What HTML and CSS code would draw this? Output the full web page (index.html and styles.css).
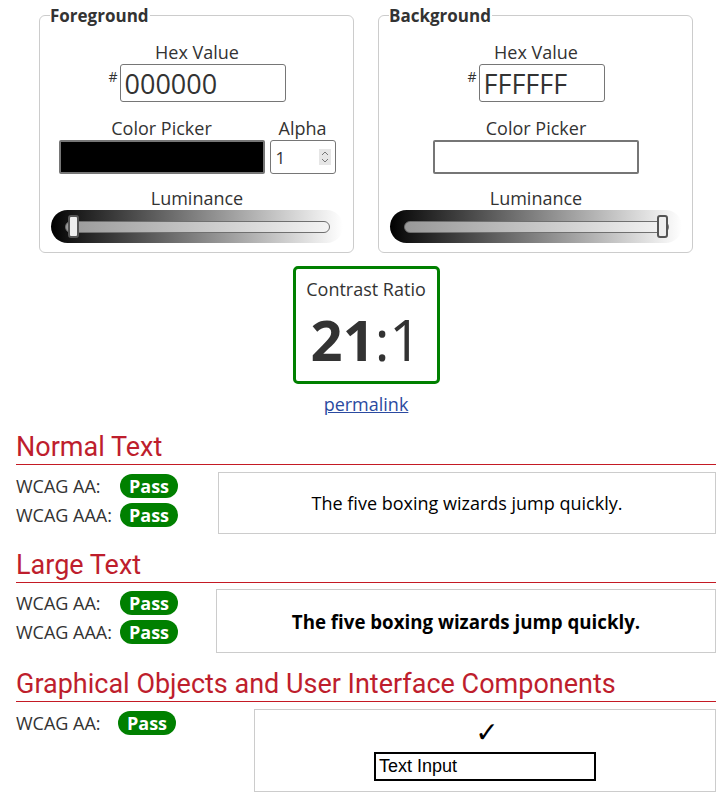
FILE: index.html
```html
<!DOCTYPE html>
<html lang="en">
<head>
<meta charset="utf-8">
<title>Contrast Checker</title>
<link rel="stylesheet" href="styles.css">
</head>
<body>
<main class="page">
  <div class="pickers">
    <fieldset class="panel">
      <legend>Foreground</legend>
      <div class="field-label">Hex Value</div>
      <div class="hex-row"><span class="hash">#</span><input class="hex-input hex-fg" type="text" value="000000"></div>
      <div class="picker-row">
        <div class="picker-col">
          <div class="field-label">Color Picker</div>
          <div class="swatch swatch-black"></div>
        </div>
        <div class="picker-col">
          <div class="field-label">Alpha</div>
          <div class="alpha">
            <span class="alpha-val">1</span>
            <span class="spin"><svg width="10" height="16" viewBox="0 0 10 16"><path d="M2 6 L5 3 L8 6" fill="none" stroke="#777" stroke-width="1"/><path d="M2 10 L5 13 L8 10" fill="none" stroke="#777" stroke-width="1"/></svg></span>
          </div>
        </div>
      </div>
      <div class="field-label lum-label">Luminance</div>
      <div class="slider">
        <div class="track"></div>
        <div class="thumb thumb-left"></div>
      </div>
    </fieldset>
    <fieldset class="panel">
      <legend>Background</legend>
      <div class="field-label">Hex Value</div>
      <div class="hex-row"><span class="hash">#</span><input class="hex-input hex-bg" type="text" value="FFFFFF"></div>
      <div class="picker-row">
        <div class="picker-col">
          <div class="field-label">Color Picker</div>
          <div class="swatch swatch-white"></div>
        </div>
      </div>
      <div class="field-label lum-label">Luminance</div>
      <div class="slider">
        <div class="track"></div>
        <div class="thumb thumb-right"></div>
      </div>
    </fieldset>
  </div>

  <div class="ratio-wrap">
    <div class="ratio">
      <div class="ratio-label">Contrast Ratio</div>
      <div class="ratio-value"><b>21</b>:1</div>
    </div>
    <a class="permalink" href="#">permalink</a>
  </div>

  <section class="result">
    <h2>Normal Text</h2>
    <div class="res-grid res-normal">
      <div class="checks">
        <div class="check"><span class="lbl">WCAG AA:</span><span class="pass">Pass</span></div>
        <div class="check"><span class="lbl">WCAG AAA:</span><span class="pass">Pass</span></div>
      </div>
      <div class="sample sample-normal">The five boxing wizards jump quickly.</div>
    </div>
  </section>

  <section class="result">
    <h2>Large Text</h2>
    <div class="res-grid res-large">
      <div class="checks">
        <div class="check"><span class="lbl">WCAG AA:</span><span class="pass">Pass</span></div>
        <div class="check"><span class="lbl">WCAG AAA:</span><span class="pass">Pass</span></div>
      </div>
      <div class="sample sample-large">The five boxing wizards jump quickly.</div>
    </div>
  </section>

  <section class="result">
    <h2>Graphical Objects and User Interface Components</h2>
    <div class="res-grid res-graph">
      <div class="checks">
        <div class="check"><span class="lbl lbl-g">WCAG AA:</span><span class="pass">Pass</span></div>
      </div>
      <div class="sample sample-graph">
        <div class="tick">✓</div>
        <div class="text-input">Text Input</div>
      </div>
    </div>
  </section>
</main>
</body>
</html>
```

FILE: styles.css
```css
html, body {
  margin: 0;
  padding: 0;
  background: #fff;
}
body {
  font-family: "Open Sans", "Liberation Sans", sans-serif;
  color: #333;
  font-size: 18px;
}
.page {
  width: 700px;
  padding: 4px 16px 0;
}
.pickers {
  display: flex;
  justify-content: center;
  gap: 24px;
}
.panel {
  width: 315px;
  box-sizing: border-box;
  margin: 0;
  padding: 13px 9px 9px 10px;
  border: 1px solid #ccc;
  border-radius: 6px;
  display: flex;
  flex-direction: column;
  align-items: center;
}
.panel legend {
  font-weight: 700;
  font-size: 17px;
  line-height: 23px;
  padding: 0 1px 0 0;
  color: #333;
}
.field-label {
  font-size: 18px;
  line-height: 24px;
  text-align: center;
  color: #333;
}
.hex-row {
  display: flex;
  align-items: flex-start;
  height: 38px;
}
.hash {
  font-size: 14px;
  line-height: 14px;
  margin-top: 6px;
  margin-right: 2px;
}
.hex-input {
  box-sizing: border-box;
  height: 38px;
  border: 1px solid #767676;
  border-radius: 3px;
  padding: 0 4px;
  font-family: "Open Sans", "Liberation Sans", sans-serif;
  font-size: 27px;
  color: #333;
  margin: 0;
}
.hex-fg { width: 166px; }
.hex-bg { width: 126px; }
.picker-row {
  display: flex;
  gap: 5px;
  margin-top: 14px;
}
.picker-col {
  display: flex;
  flex-direction: column;
  align-items: center;
}
.swatch {
  box-sizing: border-box;
  width: 206px;
  height: 34px;
  border: 2px solid #767676;
  border-radius: 2px;
}
.swatch-black { background: #000; }
.swatch-white { background: #fff; }
.alpha {
  box-sizing: border-box;
  width: 66px;
  height: 34px;
  border: 1px solid #767676;
  border-radius: 3px;
  display: flex;
  align-items: center;
  justify-content: space-between;
  padding: 0 4px 0 5px;
}
.alpha-val {
  font-size: 17px;
  color: #333;
}
.spin {
  display: flex;
  background: #e6e6e6;
  width: 12px;
  height: 16px;
  justify-content: center;
}
.lum-label {
  margin-top: 12px;
}
.slider {
  position: relative;
  width: 292px;
  height: 33px;
  border-radius: 17px;
  background: linear-gradient(to right, #000 0%, #111 5%, #fff 100%);
  display: flex;
  align-items: center;
  justify-content: center;
}
.track {
  box-sizing: border-box;
  width: 265px;
  height: 12px;
  border: 1px solid #6f6f6f;
  border-radius: 6px;
  background: linear-gradient(to right, #999, #f4f4f4);
}
.thumb {
  position: absolute;
  top: 5px;
  width: 11px;
  height: 23px;
  box-sizing: border-box;
  background: #eee;
  border: 2px solid #555;
  border-radius: 3px;
}
.thumb-left { left: 17px; }
.thumb-right { left: 267px; }

.ratio-wrap {
  display: flex;
  flex-direction: column;
  align-items: center;
  margin-top: 13px;
}
.ratio {
  box-sizing: border-box;
  width: 147px;
  height: 118px;
  border: 3px solid #008000;
  border-radius: 5px;
  text-align: center;
  padding-top: 8px;
}
.ratio-label {
  font-size: 18px;
  line-height: 24px;
}
.ratio-value {
  font-size: 56px;
  line-height: 64px;
  margin-top: 6px;
  font-weight: 400;
  color: #333;
}
.ratio-value b {
  font-weight: 700;
}
.permalink {
  margin-top: 8px;
  font-size: 18px;
  line-height: 24px;
  color: #2b4aa0;
  text-decoration: underline;
}

.result h2 {
  font-family: Roboto, "Liberation Sans", sans-serif;
  font-weight: 400;
  font-size: 27px;
  line-height: 30px;
  color: #be1e2d;
  margin: 0;
  padding-bottom: 2px;
  border-bottom: 1px solid #c41a24;
}
.result { margin-top: 16px; }
.res-grid {
  display: flex;
  margin-top: 7px;
}
.checks {
  display: flex;
  flex-direction: column;
  gap: 5px;
  padding-top: 2px;
}
.check {
  display: flex;
  align-items: center;
  height: 24px;
}
.lbl {
  width: 104px;
  font-size: 18px;
  color: #333;
}
.lbl-g { width: 102px; }
.pass {
  box-sizing: border-box;
  width: 58px;
  height: 24px;
  border-radius: 12px;
  background: #008000;
  color: #fff;
  font-weight: 700;
  font-size: 18px;
  line-height: 24px;
  text-align: center;
}
.sample {
  box-sizing: border-box;
  flex: 1;
  border: 1px solid #ccc;
  display: flex;
  align-items: center;
  justify-content: center;
  color: #000;
}
.res-normal .sample { margin-left: 40px; height: 62px; font-size: 18px; }
.res-large .sample { margin-left: 38px; height: 64px; font-size: 18.7px; font-weight: 700; }
.res-large { margin-top: 6px; }
.res-graph .sample {
  margin-left: 78px;
  height: 83px;
  flex-direction: column;
  justify-content: flex-start;
  padding-top: 8px;
}
.tick {
  font-family: "DejaVu Sans", sans-serif;
  font-weight: 700;
  font-size: 28px;
  line-height: 30px;
  color: #000;
  margin-left: 4px;
}
.text-input {
  box-sizing: border-box;
  width: 222px;
  height: 29px;
  border: 2px solid #000;
  font-family: "Liberation Sans", Arial, sans-serif;
  font-size: 18px;
  line-height: 25px;
  padding-left: 3px;
  margin-top: 4px;
  color: #000;
}
```
